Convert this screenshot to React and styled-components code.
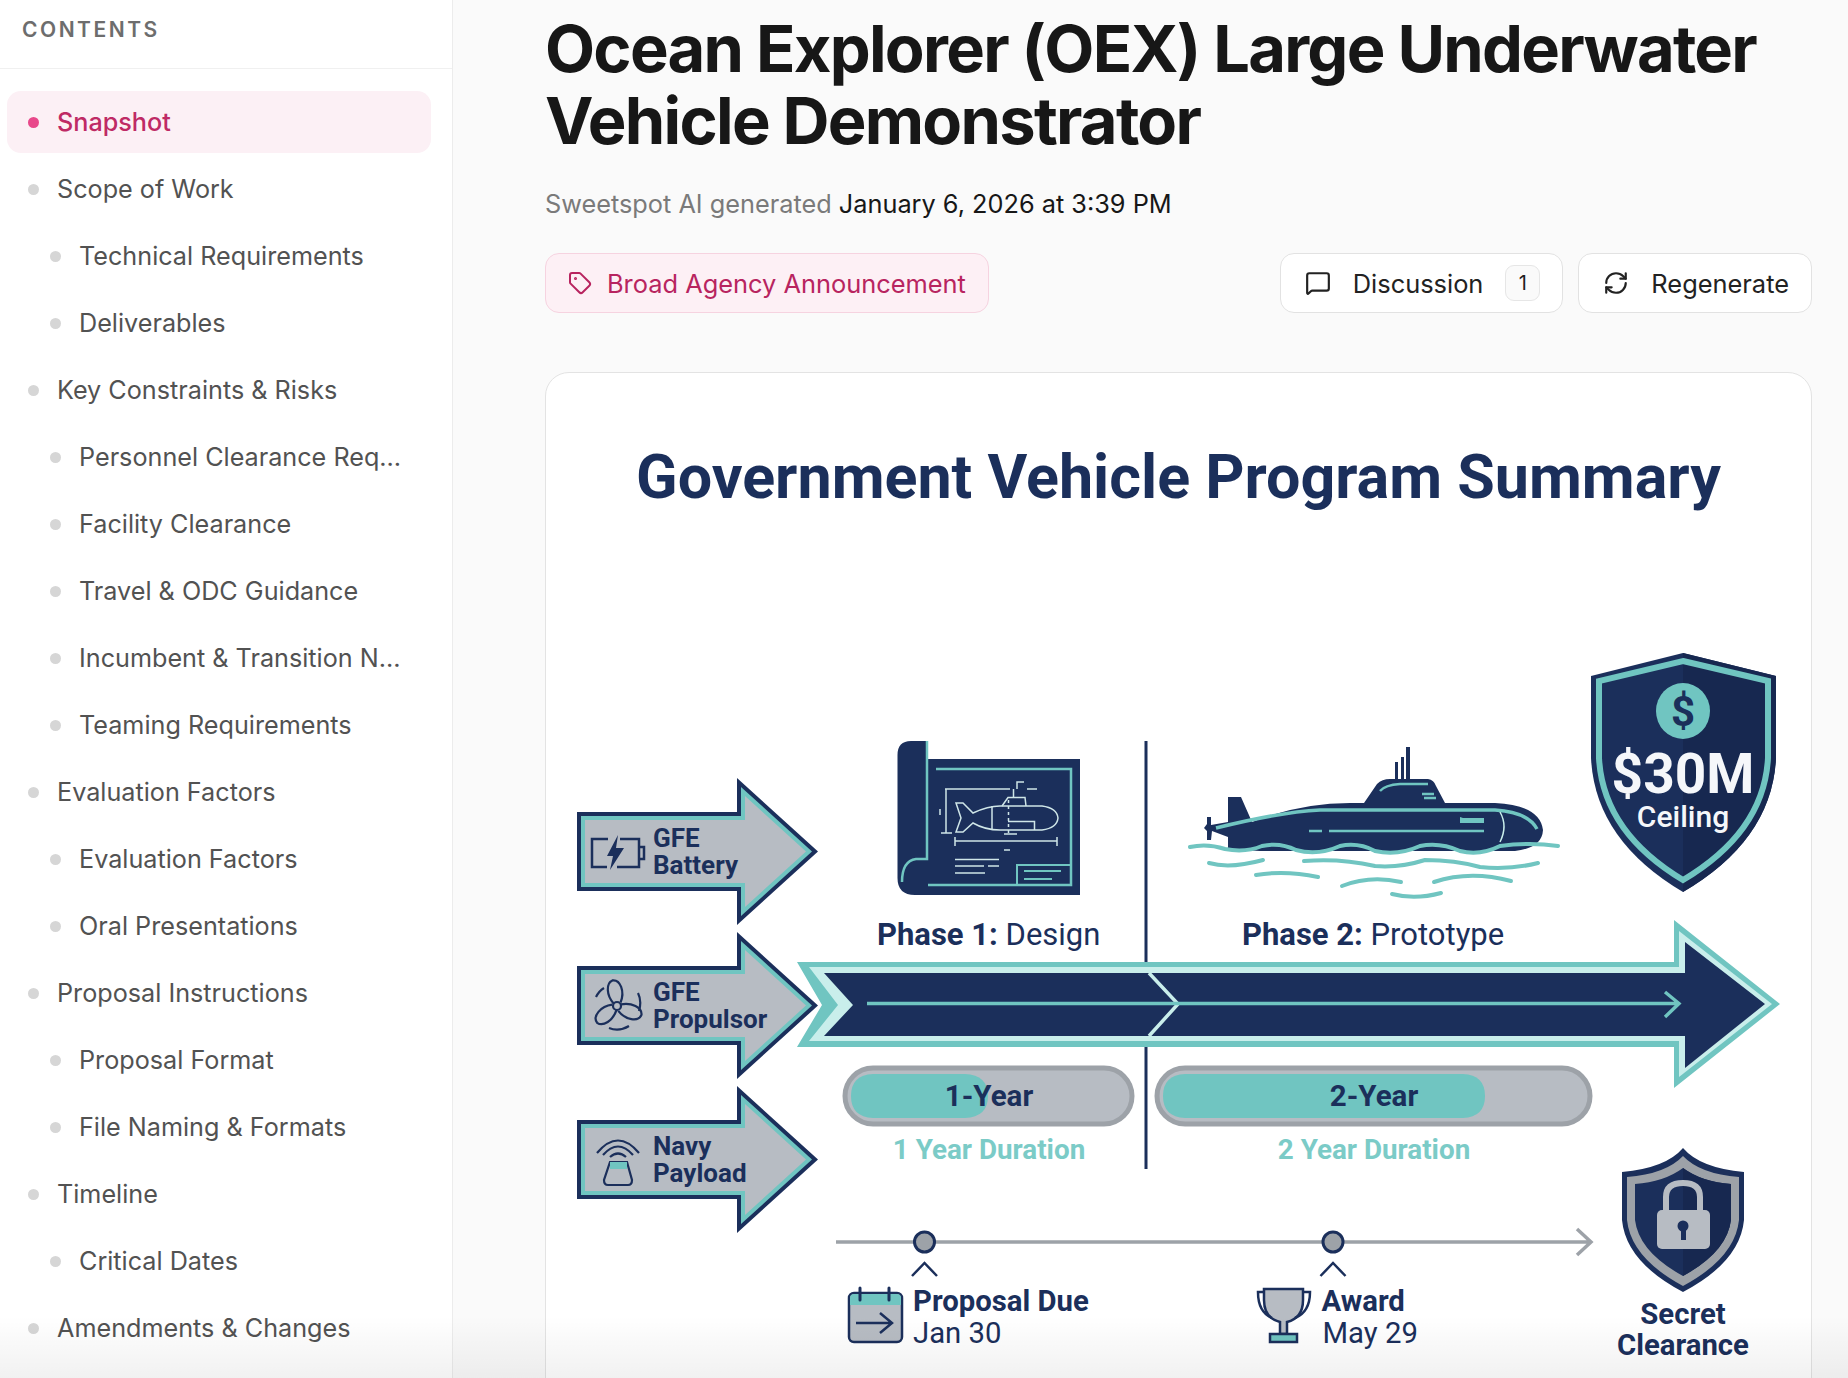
import React from "react";
import styled, { createGlobalStyle } from "styled-components";
import { Tag, MessageSquare, RefreshCw } from "lucide-react";

const NAVY = "#1b2f5b";
const TEAL = "#70c5c1";
const LIGHT = "#c9eeeb";
const GRAY = "#b7bcc3";
const STEEL = "#9da2a8";
const BLUEPRINT = "#cfe6e8";

const sections = [
  { label: "Snapshot", active: true },
  { label: "Scope of Work" },
  { label: "Technical Requirements", sub: true },
  { label: "Deliverables", sub: true },
  { label: "Key Constraints & Risks" },
  { label: "Personnel Clearance Requirements", sub: true },
  { label: "Facility Clearance", sub: true },
  { label: "Travel & ODC Guidance", sub: true },
  { label: "Incumbent & Transition Notes", sub: true },
  { label: "Teaming Requirements", sub: true },
  { label: "Evaluation Factors" },
  { label: "Evaluation Factors", sub: true },
  { label: "Oral Presentations", sub: true },
  { label: "Proposal Instructions" },
  { label: "Proposal Format", sub: true },
  { label: "File Naming & Formats", sub: true },
  { label: "Timeline" },
  { label: "Critical Dates", sub: true },
  { label: "Amendments & Changes" },
];

const GlobalStyle = createGlobalStyle`
  html, body { margin: 0; padding: 0; height: 100%; overflow: hidden; }
  body { font-family: Inter, "Liberation Sans", sans-serif; background: #fafafa; color: #171717; }
`;

const Page = styled.div`
  display: flex;
  height: 1378px;
  overflow: hidden;
  position: relative;
`;

const Sidebar = styled.aside`
  flex: 0 0 453px;
  min-width: 0;
  box-sizing: border-box;
  background: #fff;
  border-right: 1px solid #ececec;
`;

const SidebarHead = styled.div`
  box-sizing: border-box;
  height: 69px;
  padding: 16px 22px 0;
  border-bottom: 1px solid #f0f0f0;
  font-size: 21px;
  line-height: 28px;
  font-weight: 600;
  letter-spacing: 0.12em;
  color: #6d6d6d;
`;

const Nav = styled.nav`
  display: flex;
  flex-direction: column;
  padding: 22px 21px 0 7px;
`;

const NavItem = styled.a`
  display: flex;
  align-items: center;
  gap: 18px;
  height: 62px;
  margin-bottom: 5px;
  padding: 0 24px 0 ${(p) => (p.$sub ? "43px" : "21px")};
  border-radius: 14px;
  background: ${(p) => (p.$active ? "#fcf0f5" : "transparent")};
  color: ${(p) => (p.$active ? "#bf2a65" : "#525252")};
  font-size: 25.2px;
  font-weight: ${(p) => (p.$active ? 500 : 400)};
  line-height: 34px;
`;

const Dot = styled.span`
  flex: 0 0 11px;
  height: 11px;
  border-radius: 50%;
  background: ${(p) => (p.$active ? "#e8488a" : "#d6d6d6")};
`;

const NavText = styled.span`
  min-width: 0;
  overflow: hidden;
  white-space: nowrap;
  text-overflow: ellipsis;
`;

const Main = styled.main`
  flex: 1;
  min-width: 0;
  padding: 13px 36px 0 92px;
`;

const Title = styled.h1`
  margin: 0;
  font-size: 65px;
  line-height: 72px;
  font-weight: 700;
  letter-spacing: -0.0265em;
  color: #171717;
`;

const Meta = styled.p`
  margin: 29px 0 0;
  font-size: 25.3px;
  line-height: 36px;
  color: #7a7a7a;
  strong { font-weight: 400; color: #171717; }
`;

const Actions = styled.div`
  display: flex;
  align-items: center;
  gap: 15px;
  margin-top: 31px;
`;

const Pill = styled.span`
  box-sizing: border-box;
  display: inline-flex;
  align-items: center;
  gap: ${(p) => (p.$tag ? "15px" : "22px")};
  height: 60px;
  padding: 0 22px 0 ${(p) => (p.$tag ? "22px" : "24px")};
  border-radius: 14px;
  border: 1px solid ${(p) => (p.$tag ? "#f6d3e0" : "#e2e2e2")};
  background: ${(p) => (p.$tag ? "#fdf0f5" : "#fff")};
  color: ${(p) => (p.$tag ? "#b8245f" : "#222")};
  font-size: 25.4px;
  margin-right: ${(p) => (p.$tag ? "auto" : "0")};
`;

const Count = styled.span`
  box-sizing: border-box;
  display: inline-flex;
  align-items: center;
  justify-content: center;
  width: 35px;
  height: 36px;
  border: 1px solid #e6e6e6;
  border-radius: 9px;
  background: #fafafa;
  font-size: 20px;
`;

const Card = styled.section`
  margin-top: 59px;
  border: 1px solid #e3e3e3;
  border-radius: 24px 24px 0 0;
  background: #fff;
  overflow: hidden;
  height: 1100px;
`;

const Graphic = styled.svg`
  display: block;
  width: 1265px;
  height: 1006px;
`;

const Label = styled.text`
  font-family: Roboto, "Liberation Sans", sans-serif;
  font-size: ${(p) => p.$size || 26}px;
  font-weight: ${(p) => p.$weight || 700};
  fill: ${(p) => p.$fill || NAVY};
  text-anchor: ${(p) => p.$anchor || "start"};
`;

const BottomFade = styled.div`
  position: absolute;
  left: 0;
  right: 0;
  bottom: 0;
  height: 62px;
  background: linear-gradient(to bottom, rgba(0, 0, 0, 0), rgba(0, 0, 0, 0.055));
  pointer-events: none;
`;

// polygon for the input arrows, inset d px from the outer edge
function arrow(dy, d) {
  const l = 577 + d;
  const t = 812 + dy + d;
  const b = 891 + dy - d;
  const n = 737 + d;
  const ht = 778 + dy + 2.24 * d;
  const hb = 925 + dy - 2.24 * d;
  const tip = 818 - 1.5 * d;
  return `${l},${t} ${n},${t} ${n},${ht} ${tip},${851.5 + dy} ${n},${hb} ${n},${b} ${l},${b}`;
}

function InputArrow({ dy }) {
  return (
    <g>
      <polygon points={arrow(dy, 0)} fill={NAVY} />
      <polygon points={arrow(dy, 4)} fill={TEAL} />
      <polygon points={arrow(dy, 8)} fill={GRAY} />
    </g>
  );
}

function Blueprint() {
  return (
    <g>
      <path d="M911 741 H927 V759 H1080 V895 H915 Q897.500 895 897.500 878 V755 Q897.500 741 911 741 Z" fill={NAVY} />
      <path d="M927 741 V859 H916 Q902 861 902 882" fill="none" stroke={TEAL} strokeWidth="2.500" />
      <path d="M936 769 H1071 V885 H928" fill="none" stroke={TEAL} strokeWidth="2.500" />
      <path d="M1017 885 V865 H1070 M1024 871 H1061 M1024 879 H1052" fill="none" stroke={TEAL} strokeWidth="2" />
      <g fill="none" stroke={BLUEPRINT} strokeWidth="1.500">
        <path d="M956 803 H963 L973 813 Q988 806 1000 806 H1042 Q1057 808 1058 818 Q1057 828 1042 830 H1000 Q985 830 973 823 L963 832 H956 L961 818 Z" />
        <path d="M992 806 V830" />
        <path d="M1008.500 800 V833" strokeDasharray="3 3" />
        <path d="M1002 806 L1008 797.500 H1025 L1026 806 M1013.500 797 V789 M1017 789 V782 H1024" />
        <path d="M945 789 H1010 M1027 789 H1037 M946 789 V833 M941 833 H952 M940 809 V815" />
        <path d="M955 841 H1057 M955 837 V846 M1057 837 V846 M1004 850 H1010" />
        <path d="M1008 821.600 H1034.500 V830 M1004 834 H1017" />
        <path d="M955 859.500 H999 M955 866 H984 M988 866 H999 M955 873 H985" />
      </g>
    </g>
  );
}

function Submarine() {
  return (
    <g>
      <path d="M1228 797 H1241 L1252 822 Q1300 803 1350 803 H1364 L1377 784 Q1382 779 1390 779 H1395 V762 H1398 V779 H1401 V757 H1404 V779 H1406 V747 H1410 V779 H1428 Q1434 780 1436 786 L1445 803 H1495 Q1540 805 1543 830 Q1542 848 1515 851 H1260 L1243 850 H1228 V837 L1212 831 L1211 840 H1207 V831 L1204 828 L1207 824 V817 H1211 V825 L1228 822 Z" fill={NAVY} />
      <path d="M1216 828 Q1280 812 1320 810 H1495 Q1528 812 1537 829" fill="none" stroke={TEAL} strokeWidth="3.500" />
      <path d="M1380 791 Q1385 785 1400 784 H1428 M1422 794 L1434 794 M1424 798 H1436" fill="none" stroke={TEAL} strokeWidth="2.500" />
      <path d="M1309 831 H1322 M1329 831 H1484" stroke={TEAL} strokeWidth="2.500" />
      <path d="M1460 817 L1463 818 H1484 V823 H1460 Z" fill={TEAL} />
      <path d="M1500 812 Q1508 826 1500 842" fill="none" stroke={LIGHT} strokeWidth="1.500" />
      <g fill="none" stroke={TEAL} strokeWidth="4" strokeLinecap="round">
        <path d="M1190 847 Q1207 843 1225 849 Q1245 853 1262 846 Q1280 842 1296 850 Q1318 856 1340 846 Q1358 842 1375 851 Q1398 856 1420 846 Q1440 842 1460 851 Q1480 856 1500 846 Q1530 842 1558 846" />
        <path d="M1209 863 Q1230 869 1263 860" />
        <path d="M1304 861 Q1340 858 1375 866 Q1400 868 1425 860 Q1455 860 1480 867 Q1510 870 1538 863" />
        <path d="M1256 875 Q1285 870 1318 877" />
        <path d="M1342 886 Q1370 875 1401 882" />
        <path d="M1434 882 Q1470 870 1511 881" />
        <path d="M1392 894 Q1415 900 1441 893" />
      </g>
    </g>
  );
}

function MoneyShield() {
  return (
    <g>
      <path d="M1683 653 L1776 676 V758 Q1772 840 1683 892 Q1595 840 1591 758 V676 Z" fill={NAVY} />
      <path d="M1683 653 L1776 676 V758 Q1772 840 1683 892 Z" fill="#172850" />
      <path d="M1683 661 L1768 681 V758 Q1764 832 1683 880 Q1603 832 1599 758 V681 Z" fill="none" stroke={TEAL} strokeWidth="6" />
      <ellipse cx="1683" cy="711" rx="27" ry="28" fill={TEAL} />
      <Label x="1683" y="726" $size={42} $anchor="middle">$</Label>
      <Label x="1683" y="793" $size={55} $fill="#f5f7fa" $anchor="middle">$30M</Label>
      <Label x="1683" y="827" $size={30} $weight={500} $fill="#f5f7fa" $anchor="middle">Ceiling</Label>
    </g>
  );
}

function LockShield() {
  return (
    <g>
      <path d="M1683 1148 Q1700 1168 1744 1172 V1220 Q1740 1262 1683 1292 Q1626 1262 1622 1220 V1172 Q1666 1168 1683 1148 Z" fill={NAVY} />
      <path d="M1683 1156 Q1700 1174 1739 1177 V1220 Q1735 1258 1683 1286 Q1631 1258 1627 1220 V1177 Q1666 1174 1683 1156 Z" fill={STEEL} />
      <path d="M1683 1168 Q1702 1182 1731 1184 V1220 Q1727 1252 1683 1276 Q1639 1252 1635 1220 V1184 Q1664 1182 1683 1168 Z" fill={NAVY} />
      <path d="M1683 1168 Q1702 1182 1731 1184 V1220 Q1727 1252 1683 1276 Z" fill="#172850" />
      <path d="M1666 1212 V1197 Q1666 1183 1683 1183 Q1700 1183 1700 1197 V1212" fill="none" stroke={GRAY} strokeWidth="6" />
      <rect x="1657" y="1210" width="53" height="39" rx="5" fill={GRAY} />
      <circle cx="1683" cy="1226" r="5.500" fill={NAVY} />
      <rect x="1681" y="1226" width="5" height="14" fill={NAVY} />
    </g>
  );
}

function Graphics() {
  return (
    <Graphic viewBox="546 373 1265 1006" xmlns="http://www.w3.org/2000/svg">
      <Label x="1178.500" y="498" $size={61} $anchor="middle">Government Vehicle Program Summary</Label>

      <line x1="1146" y1="741" x2="1146" y2="1169" stroke={NAVY} strokeWidth="3" />

      <InputArrow dy={0} />
      <InputArrow dy={154} />
      <InputArrow dy={308} />

      {/* battery */}
      <g fill="none" stroke={NAVY} strokeWidth="2.500">
        <path d="M608 839 H592 V867 H607 M620 839 H639 V867 H617 M639 847 H644 V859 H639" />
      </g>
      <path d="M618 835 L607 856 H613 L610 870 L624 848 H616 Z" fill={NAVY} />
      <Label x="653" y="847" $size={26}>GFE</Label>
      <Label x="653" y="874" $size={26}>Battery</Label>

      {/* propulsor */}
      <g transform="translate(617 1006)" fill="none" stroke={NAVY} strokeWidth="2.200">
        <circle r="4" />
        {[-8, 112, 232].map((a) => (
          <path key={a} d="M-3 -3 C-9 -12 -8 -24 -1 -26 C7 -26 10 -13 4 -3" transform={`rotate(${a})`} />
        ))}
        <path d="M-21 -9 Q-18 -15 -13 -18 M21 -13 Q25 -5 22 5 M-8 22 Q2 26 12 20" />
      </g>
      <Label x="653" y="1001" $size={26}>GFE</Label>
      <Label x="653" y="1028" $size={26}>Propulsor</Label>

      {/* payload */}
      <g fill="none" stroke={NAVY} strokeWidth="2.200">
        <path d="M597 1153 Q618 1128 639 1153 M603 1155 Q618 1138 633 1155 M610 1157 Q618 1150 626 1157" />
        <path d="M610 1162 H627 L632 1180 Q632 1185 628 1185 H608 Q604 1185 604 1180 Z" />
      </g>
      <rect x="610" y="1162" width="17" height="7" fill={TEAL} />
      <Label x="653" y="1155" $size={26}>Navy</Label>
      <Label x="653" y="1182" $size={26}>Payload</Label>

      <Blueprint />
      <Label x="877" y="945" $size={31}>
        Phase 1: <tspan fontWeight="400">Design</tspan>
      </Label>

      <Submarine />
      <Label x="1242" y="945" $size={31}>
        Phase 2: <tspan fontWeight="400">Prototype</tspan>
      </Label>

      <MoneyShield />

      {/* main timeline arrow */}
      <polygon points="797,962 1674,962 1674,920 1780,1004 1674,1088 1674,1047 797,1047 822,1005" fill={TEAL} />
      <polygon points="809,967 1679,967 1679,931 1772,1004 1679,1077 1679,1041 809,1041 838,1005" fill={LIGHT} />
      <polygon points="824,973 1685,973 1685,942 1765,1004 1685,1068 1685,1036 824,1036 853,1005" fill={NAVY} />
      <path d="M1149 973 L1178 1004 L1149 1036" fill="none" stroke={LIGHT} strokeWidth="3.500" />
      <path d="M867 1003.500 H1678 M1665 992 L1679 1003.500 L1665 1017" fill="none" stroke={TEAL} strokeWidth="3.400" />

      {/* durations */}
      <rect x="845" y="1068" width="287" height="56" rx="28" fill={GRAY} stroke={STEEL} strokeWidth="5" />
      <path d="M873 1074 H965 Q988 1075 988 1096 Q988 1117 965 1118 H873 Q851 1117 851 1096 Q851 1075 873 1074 Z" fill={TEAL} />
      <Label x="989" y="1106" $size={29.500} $anchor="middle">1-Year</Label>
      <Label x="989" y="1159" $size={27.800} $fill="#7bcbc7" $anchor="middle">1 Year Duration</Label>

      <rect x="1157" y="1068" width="433" height="56" rx="28" fill={GRAY} stroke={STEEL} strokeWidth="5" />
      <path d="M1185 1074 H1463 Q1485 1075 1485 1096 Q1485 1117 1463 1118 H1185 Q1163 1117 1163 1096 Q1163 1075 1185 1074 Z" fill={TEAL} />
      <Label x="1374" y="1106" $size={29.500} $anchor="middle">2-Year</Label>
      <Label x="1374" y="1159" $size={27.800} $fill="#7bcbc7" $anchor="middle">2 Year Duration</Label>

      {/* milestones */}
      <path d="M836 1242 H1590 M1577 1229 L1591 1242 L1577 1255" fill="none" stroke={STEEL} strokeWidth="3.500" />
      <circle cx="924.500" cy="1242" r="10" fill={STEEL} stroke={NAVY} strokeWidth="3" />
      <circle cx="1333" cy="1242" r="10" fill={STEEL} stroke={NAVY} strokeWidth="3" />
      <path d="M912 1276 L924.500 1263 L937 1276 M1320.500 1276 L1333 1263 L1345.500 1276" fill="none" stroke={NAVY} strokeWidth="2.500" />

      {/* calendar */}
      <rect x="849" y="1293" width="53" height="49" rx="5" fill={GRAY} stroke={NAVY} strokeWidth="2.500" />
      <path d="M850 1305 V1298 Q850 1294 854 1294 H897 Q901 1294 901 1298 V1305 Z" fill={TEAL} />
      <path d="M860 1288 V1300 M889 1288 V1300" stroke={NAVY} strokeWidth="3" strokeLinecap="round" />
      <path d="M856 1323 H892 M880 1313 L892 1323 L880 1333" fill="none" stroke={NAVY} strokeWidth="2.500" />
      <Label x="913" y="1311" $size={29.300}>Proposal Due</Label>
      <Label x="913" y="1343" $size={29.300} $weight={400}>Jan 30</Label>

      {/* trophy */}
      <path d="M1264 1289 H1303 V1300 Q1303 1318 1287 1322 V1334 H1280 V1322 Q1264 1318 1264 1300 Z" fill={GRAY} stroke={NAVY} strokeWidth="2.500" />
      <path d="M1264 1292 H1258 Q1258 1312 1272 1318 M1303 1292 H1310 Q1310 1312 1295 1318" fill="none" stroke={NAVY} strokeWidth="2.500" />
      <rect x="1270" y="1334" width="27" height="8" fill={TEAL} stroke={NAVY} strokeWidth="2.500" />
      <Label x="1321.500" y="1311" $size={29.300}>Award</Label>
      <Label x="1322.500" y="1343" $size={29.300} $weight={400}>May 29</Label>

      <LockShield />
      <Label x="1683" y="1324" $size={29.300} $anchor="middle">Secret</Label>
      <Label x="1683" y="1355" $size={29.300} $anchor="middle">Clearance</Label>
    </Graphic>
  );
}

export default function App() {
  return (
    <>
      <GlobalStyle />
      <Page>
        <Sidebar>
          <SidebarHead>CONTENTS</SidebarHead>
          <Nav>
            {sections.map((s, i) => (
              <NavItem key={i} $sub={s.sub} $active={s.active}>
                <Dot $active={s.active} />
                <NavText>{s.label}</NavText>
              </NavItem>
            ))}
          </Nav>
        </Sidebar>
        <Main>
          <Title>
            Ocean Explorer (OEX) Large Underwater
            <br />
            Vehicle Demonstrator
          </Title>
          <Meta>
            Sweetspot AI generated <strong>January 6, 2026 at 3:39 PM</strong>
          </Meta>
          <Actions>
            <Pill $tag>
              <Tag size={24} strokeWidth={2} />
              Broad Agency Announcement
            </Pill>
            <Pill>
              <MessageSquare size={26} strokeWidth={2} />
              Discussion
              <Count>1</Count>
            </Pill>
            <Pill>
              <RefreshCw size={26} strokeWidth={2} />
              Regenerate
            </Pill>
          </Actions>
          <Card>
            <Graphics />
          </Card>
        </Main>
        <BottomFade />
      </Page>
    </>
  );
}
